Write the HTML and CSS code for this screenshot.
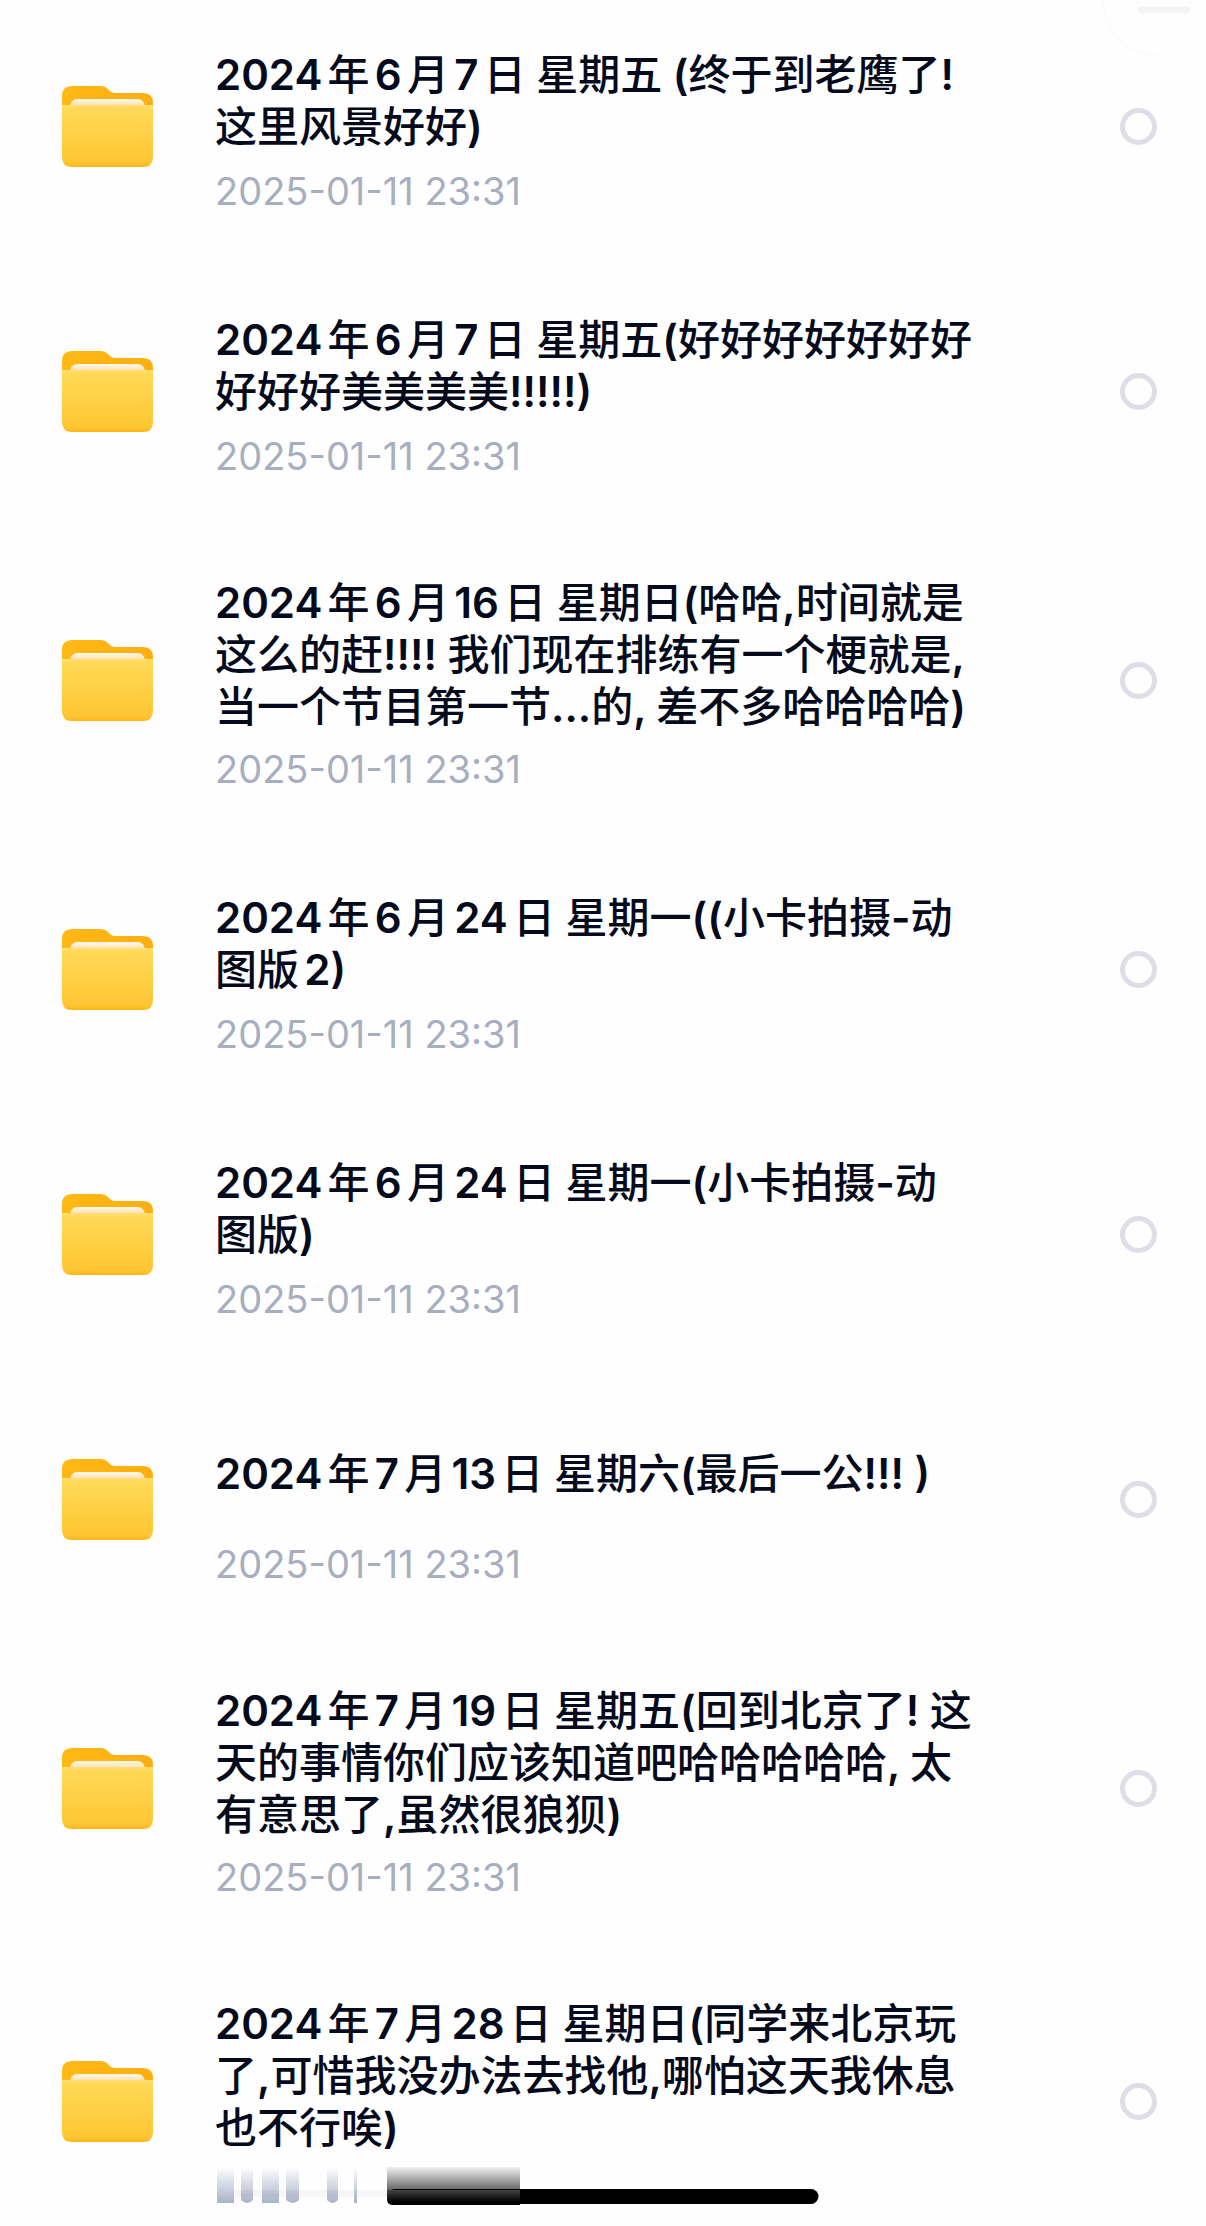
FILE: index.html
```
<!DOCTYPE html>
<html lang="zh-CN">
<head>
    <meta charset="UTF-8">
    <meta name="viewport" content="width=device-width, initial-scale=1.0">
    <title>文件夹</title>
    <link rel="stylesheet" href="styles.css">
</head>
<body>
    <!-- Folder icon, reused by every row -->
    <svg class="defs" width="0" height="0" aria-hidden="true">
        <defs>
            <linearGradient id="back" x1="0" y1="0" x2="1" y2="0">
                <stop offset="0" stop-color="#ffb915"/>
                <stop offset="1" stop-color="#fdae10"/>
            </linearGradient>
            <linearGradient id="paper" x1="0" y1="0" x2="0" y2="1">
                <stop offset="0" stop-color="#fffaf0"/>
                <stop offset="1" stop-color="#ffd590"/>
            </linearGradient>
            <linearGradient id="front" x1="0" y1="0" x2="0" y2="1">
                <stop offset="0" stop-color="#ffe07a"/>
                <stop offset="0.06" stop-color="#ffd957"/>
                <stop offset="0.92" stop-color="#ffc633"/>
                <stop offset="1" stop-color="#fdb619"/>
            </linearGradient>
        </defs>
        <symbol id="folder" viewBox="0 0 91 81">
            <path fill="url(#back)" d="M0 30V10Q0 0 10 0H39Q43 0 46 3L49 6Q51 7 54 7H81Q91 7 91 17V30Z"/>
            <path fill="url(#paper)" d="M8 22Q8 13 16 13H75Q83 13 83 22Z"/>
            <path fill="url(#front)" d="M0 19H91V71Q91 81 81 81H10Q0 81 0 71Z"/>
        </symbol>
    </svg>

    <div class="corner-panel"><span></span></div>

    <ul class="file-list">
        <li class="file-row">
            <svg class="folder-icon" aria-hidden="true"><use href="#folder"/></svg>
            <label class="file-info" for="f1">
                <span class="file-name"><span><span class="spaced">2024年6月7日</span> 星期五 (终于到老鹰了!<br>这里风景好好)</span></span>
                <time class="file-date">2025-01-11 23:31</time>
            </label>
            <input type="checkbox" id="f1">
        </li>
        <li class="file-row">
            <svg class="folder-icon" aria-hidden="true"><use href="#folder"/></svg>
            <label class="file-info" for="f2">
                <span class="file-name"><span><span class="spaced">2024年6月7日</span> 星期五(好好好好好好好<br>好好好美美美美!!!!!)</span></span>
                <time class="file-date">2025-01-11 23:31</time>
            </label>
            <input type="checkbox" id="f2">
        </li>
        <li class="file-row">
            <svg class="folder-icon" aria-hidden="true"><use href="#folder"/></svg>
            <label class="file-info" for="f3">
                <span class="file-name"><span><span class="spaced">2024年6月16日</span> 星期日(哈哈,时间就是<br>这么的赶!!!! 我们现在排练有一个梗就是,<br>当一个节目第一节...的, 差不多哈哈哈哈)</span></span>
                <time class="file-date">2025-01-11 23:31</time>
            </label>
            <input type="checkbox" id="f3">
        </li>
        <li class="file-row">
            <svg class="folder-icon" aria-hidden="true"><use href="#folder"/></svg>
            <label class="file-info" for="f4">
                <span class="file-name"><span><span class="spaced">2024年6月24日</span> 星期一((小卡拍摄-动<br><span class="spaced">图版2</span>)</span></span>
                <time class="file-date">2025-01-11 23:31</time>
            </label>
            <input type="checkbox" id="f4">
        </li>
        <li class="file-row">
            <svg class="folder-icon" aria-hidden="true"><use href="#folder"/></svg>
            <label class="file-info" for="f5">
                <span class="file-name"><span><span class="spaced">2024年6月24日</span> 星期一(小卡拍摄-动<br>图版)</span></span>
                <time class="file-date">2025-01-11 23:31</time>
            </label>
            <input type="checkbox" id="f5">
        </li>
        <li class="file-row">
            <svg class="folder-icon" aria-hidden="true"><use href="#folder"/></svg>
            <label class="file-info" for="f6">
                <span class="file-name"><span><span class="spaced">2024年7月13日</span> 星期六(最后一公!!! )</span></span>
                <time class="file-date">2025-01-11 23:31</time>
            </label>
            <input type="checkbox" id="f6">
        </li>
        <li class="file-row">
            <svg class="folder-icon" aria-hidden="true"><use href="#folder"/></svg>
            <label class="file-info" for="f7">
                <span class="file-name"><span><span class="spaced">2024年7月19日</span> 星期五(回到北京了! 这<br>天的事情你们应该知道吧哈哈哈哈哈, 太<br>有意思了,虽然很狼狈)</span></span>
                <time class="file-date">2025-01-11 23:31</time>
            </label>
            <input type="checkbox" id="f7">
        </li>
        <li class="file-row">
            <svg class="folder-icon" aria-hidden="true"><use href="#folder"/></svg>
            <label class="file-info" for="f8">
                <span class="file-name"><span><span class="spaced">2024年7月28日</span> 星期日(同学来北京玩<br>了,可惜我没办法去找他,哪怕这天我休息<br>也不行唉)</span></span>
                <!-- the date is smeared out where it meets the home bar -->
                <svg class="smear" viewBox="-1 3 306 40" aria-hidden="true">
                    <defs>
                        <linearGradient id="fade" x1="0" y1="0" x2="0" y2="1">
                            <stop offset="0" stop-color="#a9b2c8" stop-opacity="0"/>
                            <stop offset="1" stop-color="#a9b2c8"/>
                        </linearGradient>
                        <linearGradient id="shade" x1="0" y1="0" x2="0" y2="1">
                            <stop offset="0" stop-color="#000" stop-opacity="0.05"/>
                            <stop offset="1" stop-color="#000" stop-opacity="0.6"/>
                        </linearGradient>
                        <linearGradient id="glow" x1="0" y1="0" x2="0" y2="1">
                            <stop offset="0" stop-color="#444"/>
                            <stop offset="0.8" stop-color="#000"/>
                        </linearGradient>
                    </defs>
                    <g fill="url(#fade)">
                        <path d="M1 0H18V36H1Z"/>
                        <path d="M25 0H37V33Q31 39 25 33Z"/>
                        <path d="M46 0H63V36H46Z"/>
                        <path d="M70 0H83V33Q77 39 70 33Z"/>
                        <path d="M111 0H122V33Q117 39 111 33Z"/>
                        <path d="M138 0H141V36H138Z"/>
                    </g>
                    <path fill="#000" fill-opacity="0.03" d="M18 23H171V30H18Z"/>
                    <path fill="url(#shade)" d="M171 0H304V23H171Z"/>
                    <path fill="url(#glow)" d="M171 23H304V38H177Q171 38 171 32Z"/>
                </svg>
            </label>
            <input type="checkbox" id="f8">
        </li>
    </ul>

    <div class="home-bar"></div>
</body>
</html>
```
FILE: styles.css
```
* {
    box-sizing: border-box;
}

body {
    margin: 0;
    height: 100vh;
    overflow: hidden;
    background-color: #fefefe;
    color: #050b1c;
    font-family: Inter, "Noto Sans CJK SC Medium", "Noto Sans CJK SC", sans-serif;
}

.defs {
    position: absolute;
}

/* the list is scrolled by a few pixels */
.file-list {
    list-style: none;
    margin: -6px 0 0;
    padding: 0;
}

.file-row {
    display: flex;
    align-items: center;
    padding: 0 49px 0 62px;
}

.folder-icon {
    flex: none;
    width: 91px;
    height: 81px;
    margin-right: 62px;
}

.file-info {
    flex: 1;
    display: flex;
    flex-direction: column;
    gap: 16px;
    padding: 53px 0 48px;
}

.file-name {
    display: flex;
    align-items: center;
    min-height: 108px;
    font-size: 42px;
    line-height: 52px;
    font-weight: 600;
    white-space: nowrap;
}

/* breathing room between digits and characters */
.spaced {
    text-autospace: normal;
}

.file-date {
    font-size: 38px;
    line-height: 40px;
    color: #a7aebf;
}

.smear {
    position: relative;
    z-index: 1;
    display: block;
    width: 306px;
    height: 40px;
    overflow: visible;
}

input[type="checkbox"] {
    appearance: none;
    flex: none;
    width: 37px;
    height: 37px;
    margin: 0;
    border: 5px solid #dddee7;
    border-radius: 50%;
}

input[type="checkbox"]:checked {
    background-color: #a7aebf;
}

/* faint panel peeking in from the top right */
.corner-panel {
    position: absolute;
    top: 0;
    right: 0;
    width: 104px;
    height: 57px;
    padding: 7px 16px;
    border-bottom: 2px solid #fbfbfb;
    border-left: 2px solid #fbfbfb;
    border-bottom-left-radius: 57px;
}

.corner-panel span {
    display: block;
    width: 52px;
    height: 6px;
    margin-left: auto;
    border-radius: 3px;
    background-color: #f4f4f4;
}

.home-bar {
    position: fixed;
    left: 50%;
    bottom: 22px;
    width: 431px;
    height: 15px;
    border-radius: 8px;
    background-color: #000;
    transform: translateX(-50%);
}
```
